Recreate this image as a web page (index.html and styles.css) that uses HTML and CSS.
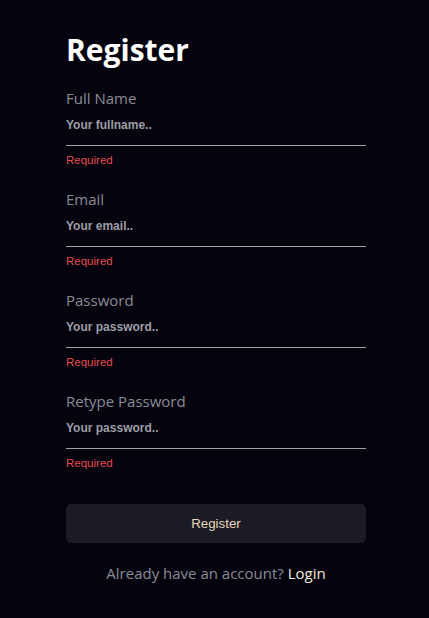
FILE: index.html
```html
<!DOCTYPE html>
<html lang="en">
<head>
<meta charset="utf-8">
<title>Register</title>
<link rel="stylesheet" href="styles.css">
</head>
<body>
<main class="page">
  <form class="form">
    <h1 class="title">Register</h1>
    <div class="field">
      <label class="label">Full Name</label>
      <input class="input" type="text" placeholder="Your fullname..">
      <div class="error">Required</div>
    </div>
    <div class="field">
      <label class="label">Email</label>
      <input class="input" type="email" placeholder="Your email..">
      <div class="error">Required</div>
    </div>
    <div class="field">
      <label class="label">Password</label>
      <input class="input" type="password" placeholder="Your password..">
      <div class="error">Required</div>
    </div>
    <div class="field">
      <label class="label">Retype Password</label>
      <input class="input" type="password" placeholder="Your password..">
      <div class="error">Required</div>
    </div>
    <button class="btn" type="button">Register</button>
    <p class="switch">Already have an account? <a class="link" href="#">Login</a></p>
  </form>
</main>
</body>
</html>
```
FILE: styles.css
```css
html, body {
  margin: 0;
  padding: 0;
  background: #04030e;
  height: 100%;
}
body {
  font-family: "Open Sans", "Noto Sans", sans-serif;
  color: #fff;
}
.page {
  display: flex;
  justify-content: center;
  padding: 30px 0 0 3px;
}
.form {
  width: 300px;
  display: flex;
  flex-direction: column;
}
.title {
  margin: 0 0 18px;
  font-size: 30px;
  line-height: 40px;
  font-weight: 700;
  color: #ffffff;
}
.field {
  display: flex;
  flex-direction: column;
  margin-bottom: 22px;
}
.label {
  font-size: 15px;
  line-height: 20px;
  color: #8b8b96;
}
.input {
  background: transparent;
  border: none;
  border-bottom: 1px solid #a3a3ad;
  padding: 7px 0 11px;
  margin: 0;
  height: 38px;
  box-sizing: border-box;
  font-family: "Liberation Sans", Arial, sans-serif;
  font-size: 12px;
  font-weight: 700;
  line-height: 16px;
  color: #d0d0d6;
  outline: none;
}
.input::placeholder {
  color: #9e9ea6;
  opacity: 1;
}
.error {
  margin-top: 7px;
  font-family: "Liberation Sans", Arial, sans-serif;
  font-size: 11.5px;
  line-height: 14px;
  color: #e84c4c;
}
.btn {
  margin-top: 12px;
  height: 39px;
  border: none;
  border-radius: 5px;
  background: #1b1b25;
  color: #e8d6ba;
  font-family: "Liberation Sans", Arial, sans-serif;
  font-size: 13.333px;
  cursor: pointer;
}
.switch {
  margin: 20px 0 0;
  text-align: center;
  font-size: 15px;
  line-height: 20px;
  color: #8b8b96;
}
.link {
  color: #f0e8da;
  text-decoration: none;
}
```
